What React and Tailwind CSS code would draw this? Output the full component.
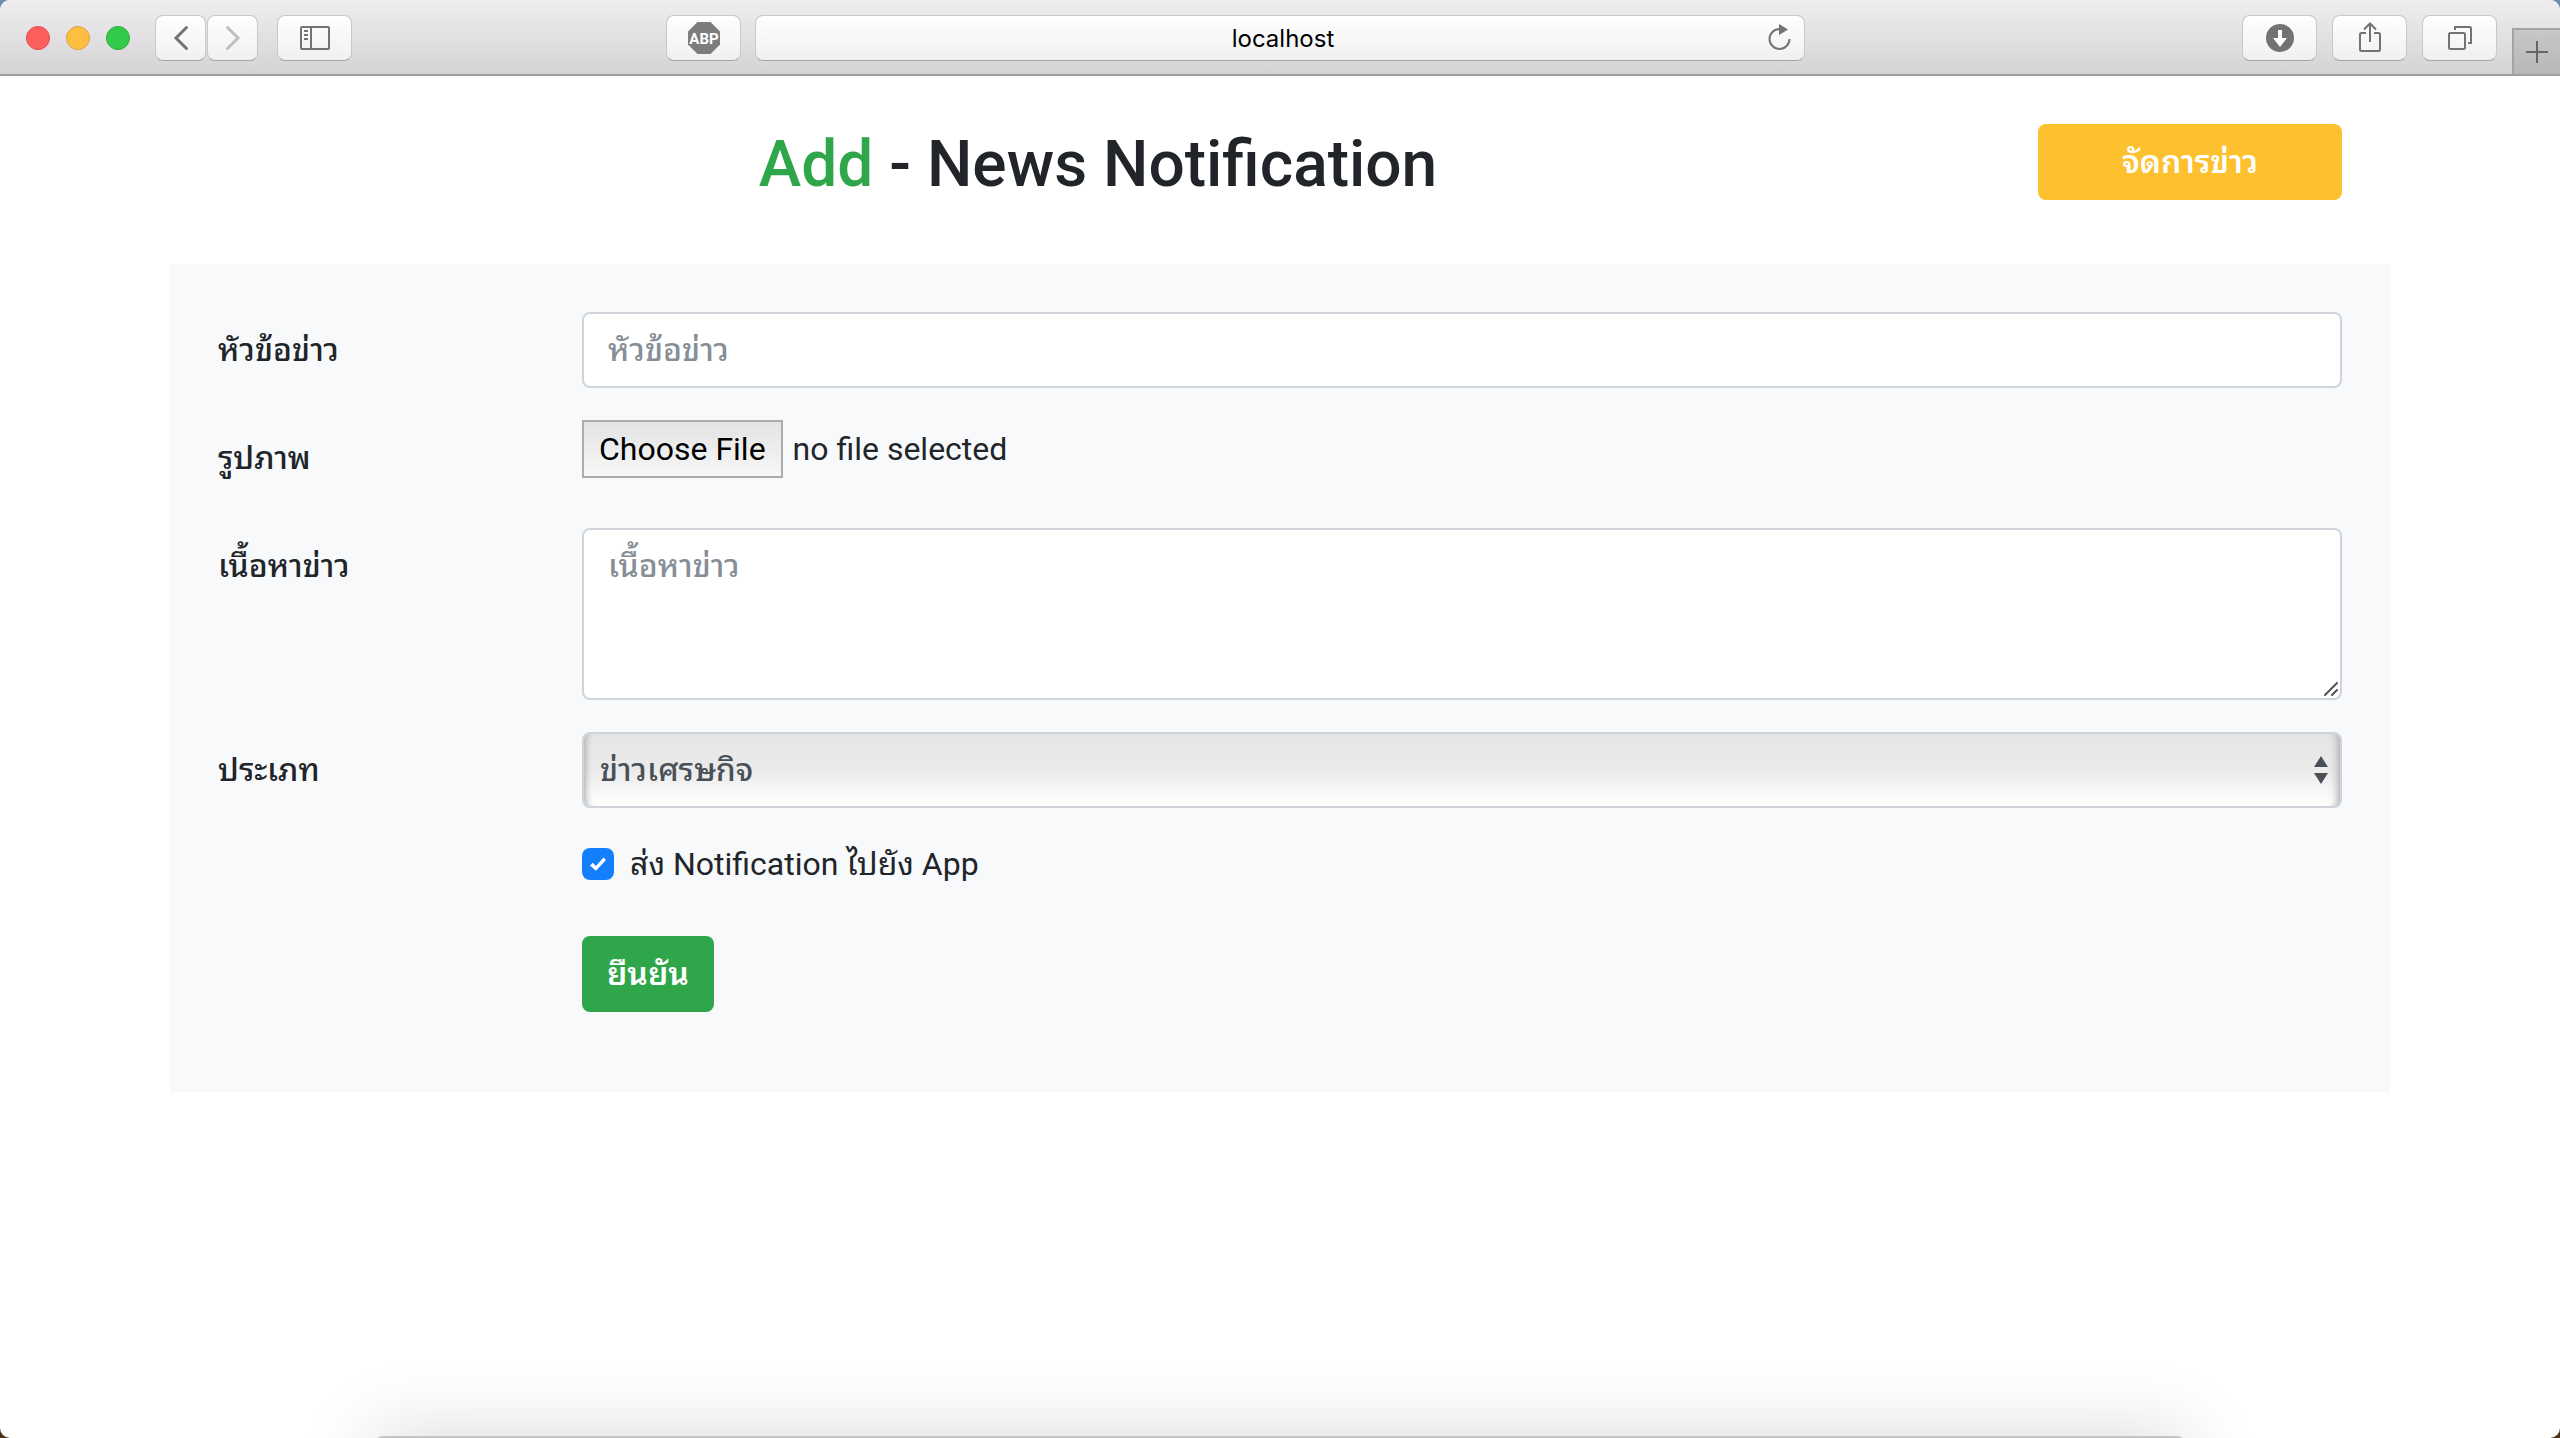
import React from "react";

const toolButton =
  "flex h-[46px] items-center justify-center rounded-lg border border-[#c9c7ca] border-b-[#a5a4a6] bg-linear-to-b from-white to-[#f0f0f0] text-[#737373]";

function Toolbar() {
  return (
    <header className="grid h-[76px] grid-cols-[1fr_41%_1fr] items-center border-b-2 border-[#a09ea1] bg-linear-to-b from-[#efedf0] to-[#d5d3d6] pt-0.5">
      <div className="flex items-center pr-3.5 pl-[26px]">
        <div className="flex gap-4">
          <button aria-label="Close" className="size-6 rounded-full border border-[#e5484a] bg-[#fc605c]" />
          <button aria-label="Minimize" className="size-6 rounded-full border border-[#dfa03a] bg-[#fdbf41]" />
          <button aria-label="Zoom" className="size-6 rounded-full border border-[#2bac3a] bg-[#34ca49]" />
        </div>
        <div className="ml-[25px] flex gap-px">
          <button aria-label="Back" className={`${toolButton} w-[51px]`}>
            <svg width="16" height="26" viewBox="0 0 16 26" fill="none" stroke="currentColor" strokeWidth="3" strokeLinecap="round">
              <path d="M13.500 2.500 3 13l10.500 10.500" />
            </svg>
          </button>
          <button aria-label="Forward" className={`${toolButton} w-[51px]`}>
            <svg width="16" height="26" viewBox="0 0 16 26" fill="none" stroke="#bfbfbf" strokeWidth="3" strokeLinecap="round">
              <path d="M2.500 2.500 13 13 2.500 23.500" />
            </svg>
          </button>
        </div>
        <button aria-label="Show sidebar" className={`${toolButton} ml-[19px] w-[75px]`}>
          <svg width="30" height="24" viewBox="0 0 30 24" fill="none" stroke="currentColor" strokeWidth="2">
            <rect x="1" y="1" width="28" height="22" rx="1" />
            <path d="M11 1v22M4 5h4M4 9h4M4 13h4" />
          </svg>
        </button>
        <button aria-label="Adblock Plus" className={`${toolButton} ml-auto w-[75px]`}>
          <svg width="32" height="32" viewBox="0 0 32 32">
            <path d="M9.500 0h13L32 9.500v13L22.500 32h-13L0 22.500v-13z" fill="#7d7d7d" />
            <text x="16" y="21.500" textAnchor="middle" fill="#fff" fontSize="15" fontWeight="700" fontFamily="Roboto, sans-serif">
              ABP
            </text>
          </svg>
        </button>
      </div>
      <div className={`${toolButton} relative`}>
        <input
          aria-label="Address"
          defaultValue="localhost"
          className="h-full w-full bg-transparent pl-1.5 text-center font-['Inter',sans-serif] text-2xl text-black outline-none"
        />
        <button aria-label="Reload" className="absolute right-2.5 flex size-7 items-center justify-center">
          <svg width="24" height="28" viewBox="0 0 24 28" fill="none">
            <path d="M21.500 15A10 10 0 1 1 11.500 5" stroke="currentColor" strokeWidth="2" />
            <path d="M11 0v11l9-5.500z" fill="currentColor" />
          </svg>
        </button>
      </div>
      <div className="flex h-full items-center justify-end gap-[15px]">
        <button aria-label="Downloads" className={`${toolButton} w-[75px]`}>
          <svg width="28" height="28" viewBox="0 0 28 28">
            <circle cx="14" cy="14" r="14" fill="currentColor" />
            <path d="M12 6h4v8h5l-7 9-7-9h5z" fill="#fff" />
          </svg>
        </button>
        <button aria-label="Share" className={`${toolButton} w-[75px]`}>
          <svg width="24" height="32" viewBox="0 0 24 32" fill="none" stroke="currentColor" strokeWidth="2">
            <path d="M8 11H3.500A1.500 1.500 0 0 0 2 12.500v15A1.500 1.500 0 0 0 3.500 29h17a1.500 1.500 0 0 0 1.500-1.500v-15a1.500 1.500 0 0 0-1.500-1.500H16M12 20V2M6 7.500 12 1.500l6 6" />
          </svg>
        </button>
        <button aria-label="Show all tabs" className={`${toolButton} w-[75px]`}>
          <svg width="24" height="24" viewBox="0 0 24 24" fill="none" stroke="currentColor" strokeWidth="2">
            <rect x="1" y="7" width="16" height="16" rx="1.500" />
            <path d="M7 4V1h14.500A1.500 1.500 0 0 1 23 2.500V17h-3" />
          </svg>
        </button>
        <button
          aria-label="New tab"
          className="flex h-[46px] w-12 items-center justify-center self-end border-t-2 border-l-2 border-[#a5a3a6] bg-linear-to-b from-[#c8c6c9] to-[#b9b7ba] text-[#666]"
        >
          <svg width="22" height="22" viewBox="0 0 22 22" stroke="currentColor" strokeWidth="2">
            <path d="M11 0v22M0 11h22" />
          </svg>
        </button>
      </div>
    </header>
  );
}

function Row({ id, label, children }) {
  return (
    <div className="grid grid-cols-[304px_1fr] items-start gap-[60px]">
      {label ? (
        <label htmlFor={id} className="py-3.5 leading-[48px] font-medium">
          {label}
        </label>
      ) : (
        <span />
      )}
      <div>{children}</div>
    </div>
  );
}

const field =
  "block w-full rounded-lg border-2 border-[#ced4da] bg-white px-6 py-3 leading-[48px] font-medium text-[#495057] placeholder:text-[#868e96] placeholder:opacity-100";

export default function App() {
  return (
    <div className="bg-linear-to-b from-[#6f8bab] to-[#4a2f14]">
      <div className="relative min-h-screen overflow-hidden rounded-[10px] bg-white font-['Roboto','Noto_Sans_Thai_Looped','Noto_Sans_Thai',sans-serif] text-[32px] text-[#212529]">
        <Toolbar />
        <main className="mx-auto max-w-[2220px]">
          <div className="grid grid-cols-[1fr_304px] items-start gap-[60px] px-12 pt-12 pb-[58px]">
            <h1 className="text-center text-[64px] leading-[82px] font-medium">
              <span className="text-[#30a64a]">Add</span> - News Notification
            </h1>
            <button className="h-[76px] rounded-lg bg-[#fdc02f] font-semibold text-white">จัดการข่าว</button>
          </div>
          <form className="flex flex-col gap-8 bg-[#f8f9fa] px-12 pt-12 pb-20" onSubmit={(e) => e.preventDefault()}>
            <Row id="title" label="หัวข้อข่าว">
              <input id="title" type="text" placeholder="หัวข้อข่าว" className={`${field} h-[76px]`} />
            </Row>
            <Row id="image" label="รูปภาพ">
              <input id="image" type="file" className="sr-only" />
              <label htmlFor="image" className="flex items-center gap-2.5">
                <span className="flex h-[58px] items-center border-2 border-[#acacac] bg-linear-to-b from-[#e3e3e3] to-[#f7f7f7] px-[15px] text-black">
                  Choose File
                </span>
                no file selected
              </label>
            </Row>
            <Row id="content" label="เนื้อหาข่าว">
              <div className="relative">
                <textarea
                  id="content"
                  rows={3}
                  placeholder="เนื้อหาข่าว"
                  className={`${field} h-[172px] [&::-webkit-resizer]:bg-transparent`}
                />
                <svg
                  className="pointer-events-none absolute right-1 bottom-1"
                  width="14"
                  height="14"
                  viewBox="0 0 14 14"
                  stroke="#555"
                  strokeWidth="2"
                  strokeLinecap="round"
                >
                  <path d="M1 13 13 1M8 13l5-5" />
                </svg>
              </div>
            </Row>
            <Row id="category" label="ประเภท">
              <div className="relative">
                <select
                  id="category"
                  className="block h-[76px] w-full appearance-none rounded-lg border-2 border-[#ced4da] bg-linear-to-b from-[#e5e5e5] via-[#ebebeb] to-white px-4 font-medium text-[#495057] shadow-[inset_8px_0_6px_-6px_#b0b0b0,inset_-10px_0_8px_-8px_#a8a8a8]"
                >
                  <option>ข่าวเศรษกิจ</option>
                </select>
                <svg className="pointer-events-none absolute top-6 right-3.5" width="14" height="28" viewBox="0 0 14 28" fill="#495057">
                  <path d="M0 11 7 0l7 11zM0 17h14L7 28z" />
                </svg>
              </div>
            </Row>
            <Row>
              <label className="flex h-12 items-center gap-4">
                <span className="relative flex size-8">
                  <input type="checkbox" defaultChecked className="peer size-8 appearance-none rounded-lg bg-white checked:bg-[#147efb]" />
                  <svg
                    className="pointer-events-none absolute inset-0 hidden peer-checked:block"
                    width="32"
                    height="32"
                    viewBox="0 0 32 32"
                    fill="#fff"
                  >
                    <path d="m21.500 9.500-7.600 8.500-3.200-3.300L8 17.500l5.900 5.200L24 12z" />
                  </svg>
                </span>
                <span>ส่ง Notification ไปยัง App</span>
              </label>
            </Row>
            <Row>
              <button type="submit" className="mt-4 h-[76px] rounded-lg bg-[#30a64a] px-[25px] font-semibold text-white">
                ยืนยัน
              </button>
            </Row>
          </form>
        </main>
        <div
          aria-hidden="true"
          className="pointer-events-none absolute inset-x-[375px] -bottom-24 h-[98px] rounded-lg bg-[#c4c4c4] shadow-[0_0_80px_rgba(0,0,0,0.16)]"
        />
      </div>
    </div>
  );
}
